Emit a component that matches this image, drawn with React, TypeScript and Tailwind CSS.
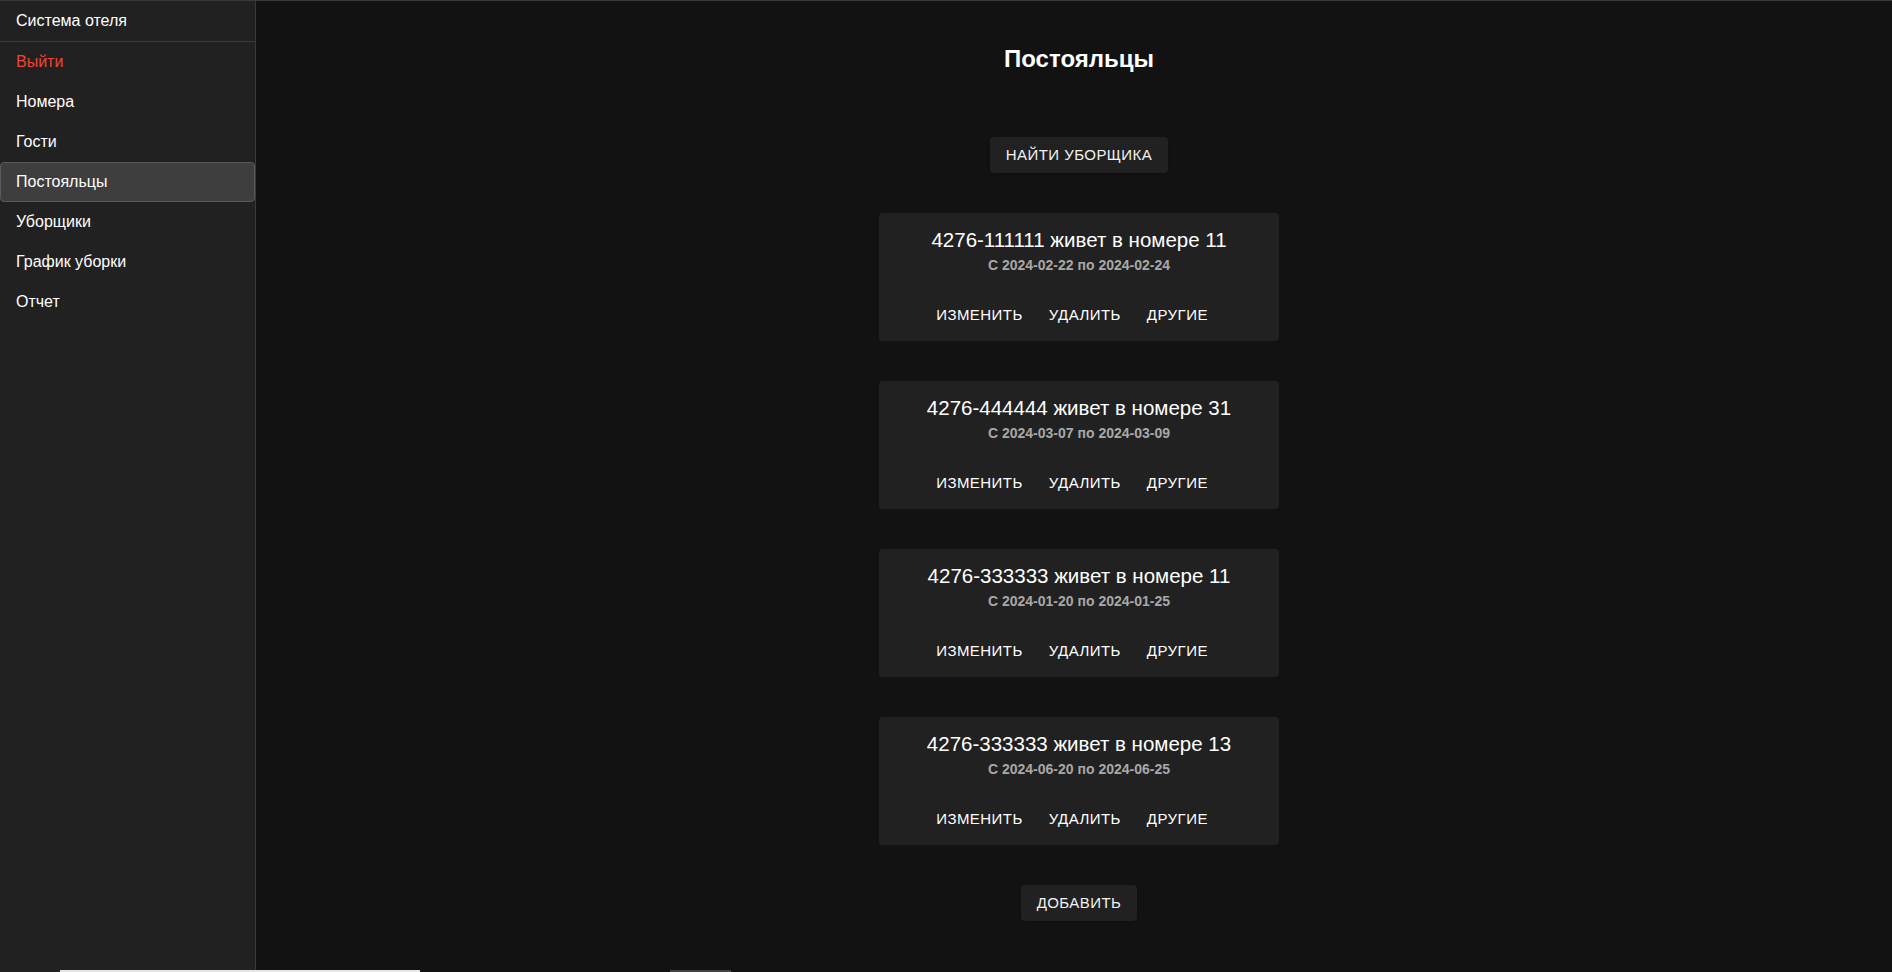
import React from 'react';

const navItems = [
  { label: 'Выйти', danger: true },
  { label: 'Номера' },
  { label: 'Гости' },
  { label: 'Постояльцы', active: true },
  { label: 'Уборщики' },
  { label: 'График уборки' },
  { label: 'Отчет' },
];

const residents = [
  { passport: '4276-111111', room: 11, from: '2024-02-22', to: '2024-02-24' },
  { passport: '4276-444444', room: 31, from: '2024-03-07', to: '2024-03-09' },
  { passport: '4276-333333', room: 11, from: '2024-01-20', to: '2024-01-25' },
  { passport: '4276-333333', room: 13, from: '2024-06-20', to: '2024-06-25' },
];

function TextButton({ children }: { children: React.ReactNode }) {
  return (
    <button className="h-9 px-2 rounded text-[15px] uppercase tracking-[0.45px] text-white hover:bg-white/5">
      {children}
    </button>
  );
}

function ContainedButton({ children }: { children: React.ReactNode }) {
  return (
    <button className="h-9 px-4 rounded bg-[#212121] text-[15px] uppercase tracking-[0.45px] text-[#f2f2f2] shadow-sm">
      {children}
    </button>
  );
}

export default function App() {
  return (
    <div
      className="relative flex h-screen w-full overflow-hidden border-t border-[#38383d] bg-[#121212] text-white"
      style={{ fontFamily: '"Liberation Sans", Arial, sans-serif' }}
    >
      {/* sidebar */}
      <aside className="flex w-[256px] shrink-0 flex-col border-r border-[#3a3a3a] bg-[#212121]">
        <div className="flex h-[41px] items-center border-b border-[#3a3a3a] pl-4 text-[16px]">
          Система отеля
        </div>
        <nav className="flex flex-col">
          {navItems.map(item => (
            <div
              key={item.label}
              className={
                'flex h-10 items-center rounded border pl-[15px] text-[16px] ' +
                (item.active
                  ? 'border-[#5a5a5a] bg-[#3e3e3e] text-white'
                  : 'border-transparent ' + (item.danger ? 'text-[#f44336]' : 'text-white'))
              }
            >
              {item.label}
            </div>
          ))}
        </nav>
      </aside>

      {/* main */}
      <main className="flex flex-1 flex-col items-center pl-[10px] pt-[44px]">
        <h1 className="text-[24px] font-bold leading-[28px]">Постояльцы</h1>

        <div className="mt-16">
          <ContainedButton>Найти уборщика</ContainedButton>
        </div>

        <div className="mt-10 flex flex-col gap-10">
          {residents.map((r, i) => (
            <div key={i} className="flex h-[128px] w-[400px] flex-col rounded bg-[#212121]">
              <div className="flex flex-col items-center pt-[15px] pb-[14px]">
                <div className="text-[20.5px] leading-[24px]">
                  {r.passport} живет в номере {r.room}
                </div>
                <div className="mt-[3px] text-[14px] font-bold leading-[20px] text-[#a8a8a8]">
                  С {r.from} по {r.to}
                </div>
              </div>
              <div className="flex justify-center gap-[10px] pt-2 pb-2 pl-2 pr-[22px]">
                <TextButton>Изменить</TextButton>
                <TextButton>Удалить</TextButton>
                <TextButton>Другие</TextButton>
              </div>
            </div>
          ))}
        </div>

        <div className="mt-10">
          <ContainedButton>Добавить</ContainedButton>
        </div>
      </main>

      {/* bits of elements peeking in at the bottom edge */}
      <div className="absolute bottom-0 left-[60px] h-[2px] w-[360px] bg-[#e6e6e6]" />
      <div className="absolute bottom-0 left-[670px] h-[2px] w-[61px] bg-[#444444]" />
    </div>
  );
}
